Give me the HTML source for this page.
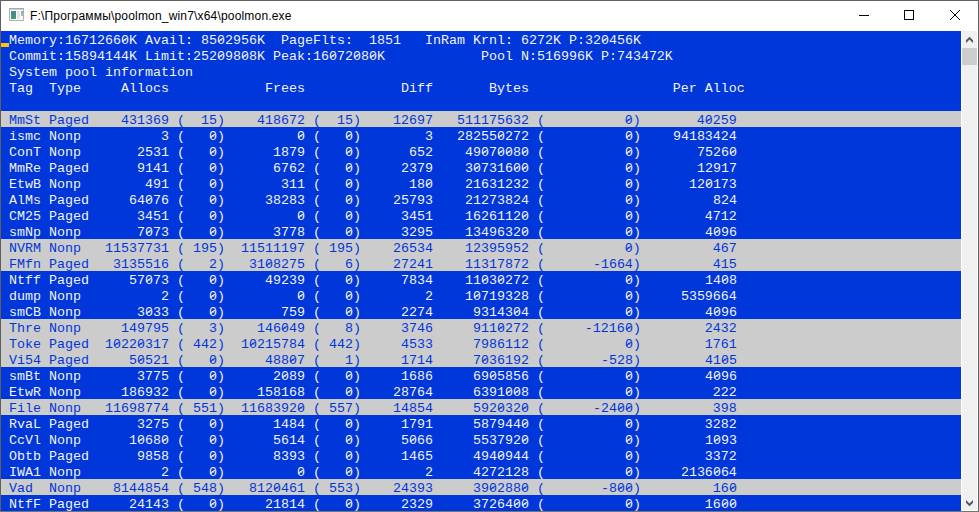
<!DOCTYPE html>
<html><head><meta charset="utf-8">
<style>
html,body{margin:0;padding:0;width:979px;height:512px;overflow:hidden;background:#fff;}
.bd{position:absolute;background:#5f5f5f}
#title{position:absolute;left:30px;top:8px;font-family:"Liberation Sans",sans-serif;font-size:12px;letter-spacing:0.18px;line-height:16px;color:#000;white-space:pre}
#con{position:absolute;left:1px;top:31px;width:960px;height:480px;background:#0037da;overflow:hidden}
.r{position:absolute;left:0;width:960px;height:14px;padding-top:2px;white-space:pre;font-family:"Liberation Mono",monospace;color:#f2f2f2;font-size:13.333px;line-height:16px}
i{font-style:normal;position:relative}
i::after{content:"";position:absolute;left:3.3px;top:4.1px;width:1px;height:5.8px;background:currentColor;transform:rotate(54deg)}
.hl{background:#cccccc;color:#0037da}
#cur{position:absolute;left:0;top:12px;width:8px;height:4px;background:#ffc20e}
#sb{position:absolute;left:961px;top:31px;width:17px;height:480px;background:#fff}
#sbi{position:absolute;left:1px;top:0;width:15px;height:479px;background:#f0f0f0}
#thumb{position:absolute;left:1px;top:17px;width:15px;height:17px;background:#cdcdcd}
svg{position:absolute;left:0;top:0}
#ico{position:absolute;left:9px;top:8px;width:13px;height:11px;border:1px solid #b0b0b0;border-top-color:#a8a8a8;background:#fbfbfb;box-shadow:inset 0 1px 0 #d0d0d0}
</style></head><body>
<div class="bd" style="left:0;top:0;width:979px;height:1px"></div>
<div class="bd" style="left:0;top:0;width:1px;height:512px"></div>
<div class="bd" style="left:978px;top:0;width:1px;height:512px"></div>
<div class="bd" style="left:0;top:511px;width:979px;height:1px;background:#78746a"></div>
<div id="ico">
 <div style="position:absolute;left:1px;top:2px;width:5px;height:8px;background:linear-gradient(160deg,#5580c0,#3f8f80 55%,#45a85a)"></div>
 <div style="position:absolute;left:7px;top:2px;width:3px;height:8px;background:#e6e6e6"></div>
 <div style="position:absolute;left:11px;top:2px;width:2px;height:5px;background:linear-gradient(#7aa6d8,#9ed08a)"></div>
</div>
<div id="title">F:\Программы\poolmon_win7\x64\poolmon.exe</div>
<svg width="979" height="31" viewBox="0 0 979 31">
 <rect x="859" y="15" width="10" height="1" fill="#000"/>
 <rect x="904.5" y="10.5" width="9" height="9" fill="none" stroke="#000" stroke-width="1"/>
 <g fill="#000" shape-rendering="crispEdges"><rect x="950" y="10" width="1" height="1"/><rect x="959" y="10" width="1" height="1"/><rect x="951" y="11" width="1" height="1"/><rect x="958" y="11" width="1" height="1"/><rect x="952" y="12" width="1" height="1"/><rect x="957" y="12" width="1" height="1"/><rect x="953" y="13" width="1" height="1"/><rect x="956" y="13" width="1" height="1"/><rect x="954" y="14" width="1" height="1"/><rect x="955" y="14" width="1" height="1"/><rect x="955" y="15" width="1" height="1"/><rect x="954" y="15" width="1" height="1"/><rect x="956" y="16" width="1" height="1"/><rect x="953" y="16" width="1" height="1"/><rect x="957" y="17" width="1" height="1"/><rect x="952" y="17" width="1" height="1"/><rect x="958" y="18" width="1" height="1"/><rect x="951" y="18" width="1" height="1"/><rect x="959" y="19" width="1" height="1"/><rect x="950" y="19" width="1" height="1"/></g>
</svg>
<div id="con">
<div class="r" style="top:0px"> Memory:1671266<i>0</i>K Avail: 85<i>0</i>2956K  PageFlts:  1851   InRam Krnl: 6272K P:32<i>0</i>456K</div>
<div class="r" style="top:16px"> Commit:15894144K Limit:252<i>0</i>98<i>0</i>8K Peak:16<i>0</i>72<i>0</i>8<i>0</i>K            Pool N:516996K P:743472K</div>
<div class="r" style="top:32px"> System pool information</div>
<div class="r" style="top:48px"> Tag  Type     Allocs            Frees            Diff       Bytes                  Per Alloc</div>
<div class="r" style="top:64px"></div>
<div class="r hl" style="top:80px"> MmSt Paged    431369 (  15)    418672 (  15)    12697   511175632 (          <i>0</i>)       4<i>0</i>259</div>
<div class="r" style="top:96px"> ismc Nonp          3 (   <i>0</i>)         <i>0</i> (   <i>0</i>)        3   28255<i>0</i>272 (          <i>0</i>)    94183424</div>
<div class="r" style="top:112px"> ConT Nonp       2531 (   <i>0</i>)      1879 (   <i>0</i>)      652    49<i>0</i>7<i>0</i><i>0</i>8<i>0</i> (          <i>0</i>)       7526<i>0</i></div>
<div class="r" style="top:128px"> MmRe Paged      9141 (   <i>0</i>)      6762 (   <i>0</i>)     2379    3<i>0</i>7316<i>0</i><i>0</i> (          <i>0</i>)       12917</div>
<div class="r" style="top:144px"> EtwB Nonp        491 (   <i>0</i>)       311 (   <i>0</i>)      18<i>0</i>    21631232 (          <i>0</i>)      12<i>0</i>173</div>
<div class="r" style="top:160px"> AlMs Paged     64<i>0</i>76 (   <i>0</i>)     38283 (   <i>0</i>)    25793    21273824 (          <i>0</i>)         824</div>
<div class="r" style="top:176px"> CM25 Paged      3451 (   <i>0</i>)         <i>0</i> (   <i>0</i>)     3451    1626112<i>0</i> (          <i>0</i>)        4712</div>
<div class="r" style="top:192px"> smNp Nonp       7<i>0</i>73 (   <i>0</i>)      3778 (   <i>0</i>)     3295    1349632<i>0</i> (          <i>0</i>)        4<i>0</i>96</div>
<div class="r hl" style="top:208px"> NVRM Nonp   11537731 ( 195)  11511197 ( 195)    26534    12395952 (          <i>0</i>)         467</div>
<div class="r hl" style="top:224px"> FMfn Paged   3135516 (   2)   31<i>0</i>8275 (   6)    27241    11317872 (      -1664)         415</div>
<div class="r" style="top:240px"> Ntff Paged     57<i>0</i>73 (   <i>0</i>)     49239 (   <i>0</i>)     7834    11<i>0</i>3<i>0</i>272 (          <i>0</i>)        14<i>0</i>8</div>
<div class="r" style="top:256px"> dump Nonp          2 (   <i>0</i>)         <i>0</i> (   <i>0</i>)        2    1<i>0</i>719328 (          <i>0</i>)     5359664</div>
<div class="r" style="top:272px"> smCB Nonp       3<i>0</i>33 (   <i>0</i>)       759 (   <i>0</i>)     2274     93143<i>0</i>4 (          <i>0</i>)        4<i>0</i>96</div>
<div class="r hl" style="top:288px"> Thre Nonp     149795 (   3)    146<i>0</i>49 (   8)     3746     911<i>0</i>272 (     -1216<i>0</i>)        2432</div>
<div class="r hl" style="top:304px"> Toke Paged  1<i>0</i>22<i>0</i>317 ( 442)  1<i>0</i>215784 ( 442)     4533     7986112 (          <i>0</i>)        1761</div>
<div class="r hl" style="top:320px"> Vi54 Paged     5<i>0</i>521 (   <i>0</i>)     488<i>0</i>7 (   1)     1714     7<i>0</i>36192 (       -528)        41<i>0</i>5</div>
<div class="r" style="top:336px"> smBt Nonp       3775 (   <i>0</i>)      2<i>0</i>89 (   <i>0</i>)     1686     69<i>0</i>5856 (          <i>0</i>)        4<i>0</i>96</div>
<div class="r" style="top:352px"> EtwR Nonp     186932 (   <i>0</i>)    158168 (   <i>0</i>)    28764     6391<i>0</i><i>0</i>8 (          <i>0</i>)         222</div>
<div class="r hl" style="top:368px"> File Nonp   11698774 ( 551)  1168392<i>0</i> ( 557)    14854     592<i>0</i>32<i>0</i> (      -24<i>0</i><i>0</i>)         398</div>
<div class="r" style="top:384px"> RvaL Paged      3275 (   <i>0</i>)      1484 (   <i>0</i>)     1791     587944<i>0</i> (          <i>0</i>)        3282</div>
<div class="r" style="top:400px"> CcVl Nonp      1<i>0</i>68<i>0</i> (   <i>0</i>)      5614 (   <i>0</i>)     5<i>0</i>66     553792<i>0</i> (          <i>0</i>)        1<i>0</i>93</div>
<div class="r" style="top:416px"> Obtb Paged      9858 (   <i>0</i>)      8393 (   <i>0</i>)     1465     494<i>0</i>944 (          <i>0</i>)        3372</div>
<div class="r" style="top:432px"> IWA1 Nonp          2 (   <i>0</i>)         <i>0</i> (   <i>0</i>)        2     4272128 (          <i>0</i>)     2136<i>0</i>64</div>
<div class="r hl" style="top:448px"> Vad  Nonp    8144854 ( 548)   812<i>0</i>461 ( 553)    24393     39<i>0</i>288<i>0</i> (       -8<i>0</i><i>0</i>)         16<i>0</i></div>
<div class="r" style="top:464px"> NtfF Paged     24143 (   <i>0</i>)     21814 (   <i>0</i>)     2329     37264<i>0</i><i>0</i> (          <i>0</i>)        16<i>0</i><i>0</i></div>
<div id="cur"></div>
</div>
<div id="sb"><div id="sbi"><div id="thumb" style="left:0"></div></div></div>
<svg width="979" height="512" viewBox="0 0 979 512">
 <polygon points="966,40.3 969.5,36.8 973,40.3 973,43 969.5,39.5 966,43" fill="#555"/>
 <polygon points="966,502.7 969.5,506.2 973,502.7 973,500 969.5,503.5 966,500" fill="#555"/>
</svg>
</body></html>
